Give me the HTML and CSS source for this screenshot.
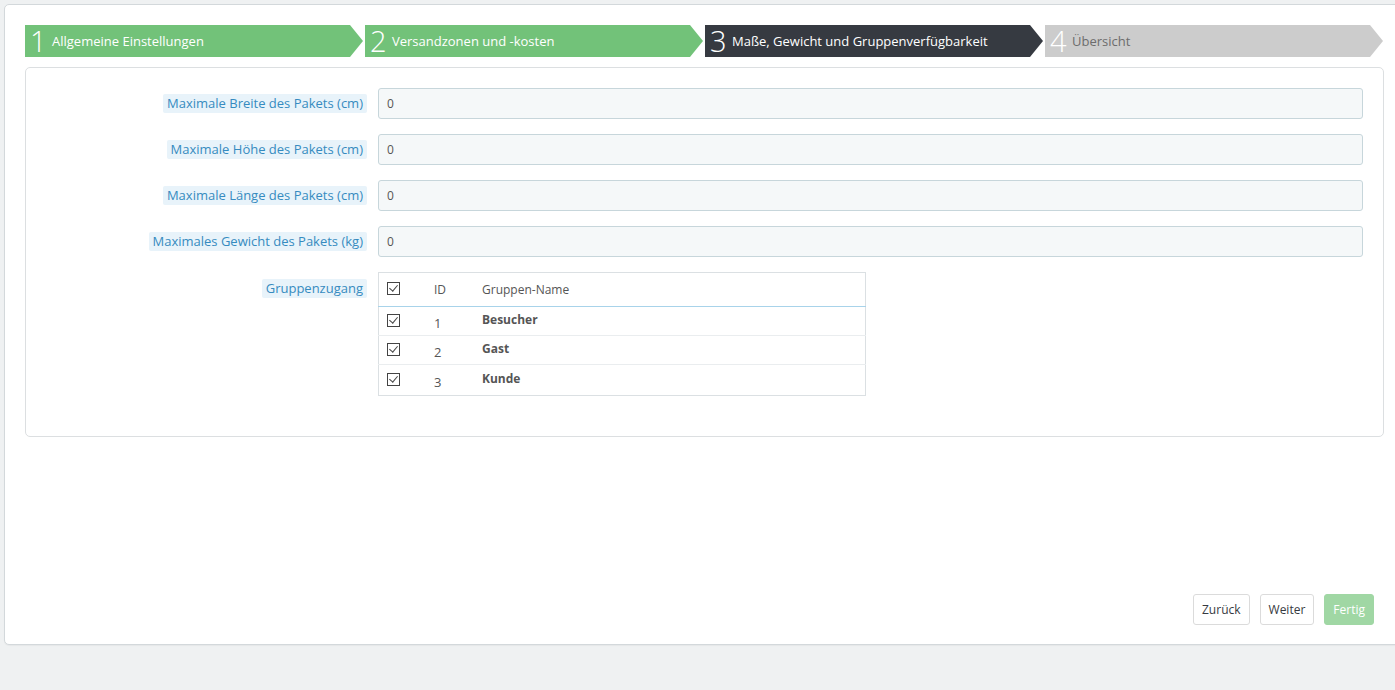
FILE: index.html
```html
<!DOCTYPE html>
<html lang="de">
<head>
    <meta charset="UTF-8">
    <title>Versanddienst - Assistent</title>
    <link rel="stylesheet" href="styles.css">
</head>
<body>
    <div class="panel">
        <div class="steps">
            <div class="step done"><span class="num">1</span><span class="txt">Allgemeine Einstellungen</span></div>
            <div class="step done"><span class="num">2</span><span class="txt">Versandzonen und -kosten</span></div>
            <div class="step current"><span class="num">3</span><span class="txt">Maße, Gewicht und Gruppenverfügbarkeit</span></div>
            <div class="step todo"><span class="num">4</span><span class="txt">Übersicht</span></div>
        </div>

        <div class="form-panel">
            <div class="form-row">
                <div class="label-col"><span class="label">Maximale Breite des Pakets (cm)</span></div>
                <div class="input">0</div>
            </div>
            <div class="form-row">
                <div class="label-col"><span class="label">Maximale Höhe des Pakets (cm)</span></div>
                <div class="input">0</div>
            </div>
            <div class="form-row">
                <div class="label-col"><span class="label">Maximale Länge des Pakets (cm)</span></div>
                <div class="input">0</div>
            </div>
            <div class="form-row">
                <div class="label-col"><span class="label">Maximales Gewicht des Pakets (kg)</span></div>
                <div class="input">0</div>
            </div>
            <div class="form-row last">
                <div class="label-col"><span class="label">Gruppenzugang</span></div>
                <div>
                    <table class="groups">
                        <thead>
                            <tr>
                                <th class="c-check"><span class="check"></span></th>
                                <th class="c-id">ID</th>
                                <th>Gruppen-Name</th>
                            </tr>
                        </thead>
                        <tbody>
                            <tr>
                                <td class="c-check"><span class="check"></span></td>
                                <td class="c-id"><span>1</span></td>
                                <td class="name"><span>Besucher</span></td>
                            </tr>
                            <tr>
                                <td class="c-check"><span class="check"></span></td>
                                <td class="c-id"><span>2</span></td>
                                <td class="name"><span>Gast</span></td>
                            </tr>
                            <tr>
                                <td class="c-check"><span class="check"></span></td>
                                <td class="c-id"><span>3</span></td>
                                <td class="name"><span>Kunde</span></td>
                            </tr>
                        </tbody>
                    </table>
                </div>
            </div>
        </div>

        <div class="actions">
            <button class="btn">Zurück</button>
            <button class="btn">Weiter</button>
            <button class="btn btn-finish">Fertig</button>
        </div>
    </div>
</body>
</html>
```

FILE: styles.css
```css
html, body {
    margin: 0;
    height: 100%;
    overflow: hidden;
}
body {
    font-family: "Open Sans", "Liberation Sans", sans-serif;
    font-size: 13px;
    color: #555;
    background: #eff1f2;
    padding: 4px 0 0 4px;
    box-sizing: border-box;
}
.panel {
    display: flex;
    flex-direction: column;
    height: 641px;
    box-sizing: border-box;
    margin-right: -10px;
    padding: 20px 20px 19px 20px;
    background: #fff;
    border: 1px solid #d3d8db;
    border-radius: 5px;
    box-shadow: 0 1px 1px rgba(0,0,0,0.04);
}
.steps {
    display: flex;
    gap: 2px;
    height: 32px;
    margin-right: 1px;
}
.step {
    flex: 1;
    display: flex;
    align-items: center;
    color: #fff;
    clip-path: polygon(0 0, calc(100% - 13px) 0, 100% 50%, calc(100% - 13px) 100%, 0 100%);
}
.step.done { background: #72c279; }
.step.current { background: #363a41; }
.step.todo { background: #cccccc; }
.step.todo .txt { color: #6c6c6c; }
.step .num {
    font-size: 29px;
    font-weight: 300;
    line-height: 32px;
    margin-left: 5px;
    width: 22px;
}
.step .txt {
    font-size: 13px;
}
.form-panel {
    margin-top: 10px;
    border: 1px solid #dcdfe1;
    border-radius: 5px;
    padding: 20px 20px 20px 20px;
}
.form-row {
    display: grid;
    grid-template-columns: 321px 1fr;
    column-gap: 11px;
    margin-bottom: 15px;
}
.form-row.last { margin-bottom: 20px; }
.label-col {
    text-align: right;
    padding-top: 6px;
}
.form-row.last .label-col { padding-top: 7px; }
.label {
    display: inline-block;
    background: #e8f3fa;
    color: #368bc0;
    padding: 0 4px;
    line-height: 19px;
    border-radius: 2px;
}
.input {
    height: 31px;
    box-sizing: border-box;
    padding: 0 8px;
    line-height: 29px;
    font-size: 12px;
    color: #555;
    background: #f5f8f9;
    border: 1px solid #c7d6db;
    border-radius: 3px;
}
.groups {
    width: 488px;
    border-collapse: collapse;
    border: 1px solid #dbe0e3;
    font-size: 12px;
    line-height: 16px;
}
.groups th {
    height: 33px;
    text-align: left;
    font-weight: normal;
    color: #555;
    border-bottom: 1px solid #a8d3ea;
    padding: 0;
}
.groups td {
    height: 28px;
    padding: 0;
    border-bottom: 1px solid #eaedef;
}
.groups tbody tr:last-child td {
    height: 30px;
    border-bottom: 1px solid #dbe0e3;
}
.c-check {
    width: 47px;
    padding-left: 8px !important;
}
.c-id {
    width: 48px;
}
td.c-id span {
    position: relative;
    top: 2px;
    font-size: 13px;
}
.name {
    font-weight: bold;
    color: #555;
}
.name span {
    position: relative;
    top: -1px;
}
.check {
    display: block;
    width: 11px;
    height: 11px;
    border: 1px solid #444;
    background: #fff;
    position: relative;
    margin-top: -2px;
}
.check::after {
    content: "";
    position: absolute;
    left: 3px;
    top: 0;
    width: 4px;
    height: 7px;
    border: solid #444;
    border-width: 0 1px 1px 0;
    transform: rotate(40deg);
}
.actions {
    margin-top: auto;
    display: flex;
    justify-content: flex-end;
    gap: 10px;
    padding-right: 10px;
}
.btn {
    font-family: "Open Sans", "Liberation Sans", sans-serif;
    font-size: 12px;
    height: 31px;
    padding: 0 8px;
    color: #363a41;
    background: #fff;
    border: 1px solid #dbdbdb;
    border-radius: 3px;
}
.btn-finish {
    color: #fff;
    background: #a0d7a4;
    border-color: #a0d7a4;
}
```
